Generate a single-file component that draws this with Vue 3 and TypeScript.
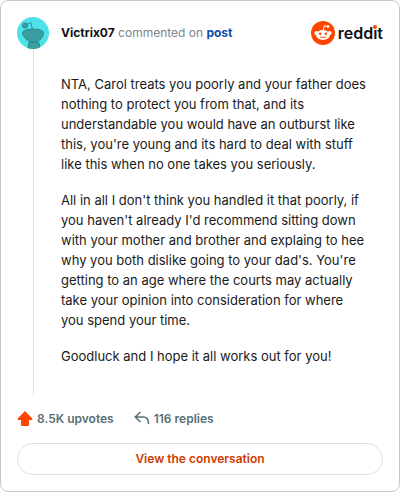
<script setup lang="ts">
interface Comment {
  author: string
  paragraphs: string[]
  upvotes: string
  replies: string
}

const comment: Comment = {
  author: 'Victrix07',
  paragraphs: [
    "NTA, Carol treats you poorly and your father does nothing to protect you from that, and its understandable you would have an outburst like this, you're young and its hard to deal with stuff like this when no one takes you seriously.",
    "All in all I don't think you handled it that poorly, if you haven't already I'd recommend sitting down with your mother and brother and explaing to hee why you both dislike going to your dad's. You're getting to an age where the courts may actually take your opinion into consideration for where you spend your time.",
    'Goodluck and I hope it all works out for you!',
  ],
  upvotes: '8.5K upvotes',
  replies: '116 replies',
}
</script>

<template>
  <article class="card">
    <header class="header">
      <svg class="avatar" viewBox="0 0 32 32" aria-hidden="true">
        <defs>
          <clipPath id="avatar-clip"><circle cx="16" cy="16" r="16" /></clipPath>
        </defs>
        <g clip-path="url(#avatar-clip)">
          <rect width="32" height="32" fill="#4de1e9" />
          <g fill="#399fa3" stroke="#267d82" stroke-width=".8" stroke-linejoin="round">
            <path d="M15.500 12.500 13.800 5.500 9.500 7.500" fill="none" stroke-linecap="round" />
            <circle cx="8" cy="8.500" r="2.500" />
            <path d="M12 25.500Q16.500 24 22 25.500L23.500 33H10.500Z" />
            <path d="M5.500 15C5.500 18 7 21 12 24.300Q16.500 26.500 21 24.300C26 21 26.500 18 26.500 15Q24 12 16 12T5.500 15Z" />
          </g>
        </g>
      </svg>
      <p class="byline">
        <strong class="author">{{ comment.author }}</strong> commented on
        <a class="post" href="#post">post</a>
      </p>
      <a class="brand" href="#reddit" aria-label="reddit">
        <svg class="mark" viewBox="0 0 24 24" aria-hidden="true">
          <circle cx="12" cy="12" r="12" fill="#ff4500" />
          <path d="m12.300 9 1-4.300 3.200.8" fill="none" stroke="#fff" stroke-width="1" stroke-linejoin="round" />
          <g fill="#fff">
            <circle cx="17" cy="5.600" r="1.400" />
            <circle cx="5.300" cy="12" r="1.900" />
            <circle cx="18.700" cy="12" r="1.900" />
            <ellipse cx="12" cy="14" rx="6.900" ry="5.100" />
          </g>
          <circle cx="9.200" cy="12.700" r="1.300" fill="#ff4500" />
          <circle cx="14.800" cy="12.700" r="1.300" fill="#ff4500" />
          <path d="M9.200 16q2.800 1.800 5.600 0" fill="none" stroke="#ff4500" stroke-width=".9" stroke-linecap="round" />
        </svg>
        <span class="wordmark">redd<span class="letter-i">ı</span>t</span>
      </a>
    </header>

    <div class="body">
      <p v-for="(paragraph, index) in comment.paragraphs" :key="index">{{ paragraph }}</p>
    </div>

    <div class="stats">
      <span class="stat">
        <svg class="icon" viewBox="0 0 16 16" aria-hidden="true">
          <path d="M8 0 15.300 7.500Q16 9 14.500 9H12V14Q12 15 11 15H5Q4 15 4 14V9H1.500Q0 9 .7 7.500Z" fill="#ff4500" />
        </svg>
        {{ comment.upvotes }}
      </span>
      <span class="stat">
        <svg class="icon" viewBox="0 0 16 16" aria-hidden="true">
          <path d="M6 1.500 1.200 6 6 10.500M1.500 6H9Q14.500 6 14.500 12.500" fill="none" stroke="#576f76" stroke-width="1.600" stroke-linecap="round" stroke-linejoin="round" />
        </svg>
        {{ comment.replies }}
      </span>
    </div>

    <a class="conversation" href="#conversation">View the conversation</a>
  </article>
</template>

<style>
body {
  background: #fff;
}
</style>

<style scoped>
.card {
  box-sizing: border-box;
  padding: 16px;
  border: 1px solid #c8c8c8;
  border-radius: 8px;
  background: #fff;
  color: #1a1a1b;
  font-family: Inter, "Liberation Sans", sans-serif;
}

.header {
  display: flex;
  align-items: center;
  gap: 12px;
}

.avatar {
  flex: none;
  width: 32px;
  height: 32px;
}

.byline {
  flex: 1;
  margin: 0;
  color: #7c8588;
  font-size: 12px;
  line-height: 16px;
}

.author {
  color: #111;
  font-weight: 700;
}

.post {
  color: #0f4da6;
  font-weight: 700;
  text-decoration: none;
}

.brand {
  display: flex;
  align-items: center;
  gap: 3px;
  color: #111;
  text-decoration: none;
}

.mark {
  width: 24px;
  height: 24px;
}

.wordmark {
  font-size: 16px;
  font-weight: 600;
  line-height: 20px;
}

.letter-i {
  position: relative;
}

.letter-i::after {
  content: "";
  position: absolute;
  top: 2px;
  left: 0;
  width: 4px;
  height: 4px;
  border-radius: 50%;
  background: #ff4500;
}

.body {
  margin-left: 16px;
  padding: 25px 16px 29px 27px;
  border-left: 1px solid #e0e0e0;
  font-size: 13px;
  line-height: 20px;
}

.body p {
  margin: 0;
}

.body p + p {
  margin-top: 16px;
}

.stats {
  display: flex;
  gap: 20px;
  margin-top: 16px;
  color: #576f76;
  font-size: 12px;
  font-weight: 600;
  line-height: 16px;
}

.stat {
  display: flex;
  align-items: center;
  gap: 4px;
}

.icon {
  width: 16px;
  height: 16px;
}

.conversation {
  display: block;
  margin-top: 16px;
  padding: 7px 16px;
  border: 1px solid #e0e0e0;
  border-radius: 16px;
  color: #cf3a00;
  font-size: 12px;
  font-weight: 600;
  line-height: 16px;
  text-align: center;
  text-decoration: none;
}
</style>
